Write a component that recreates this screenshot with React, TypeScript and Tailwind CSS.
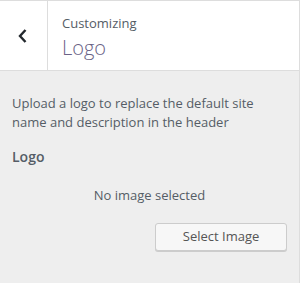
import * as React from 'react'

// Customizer panel: section header + logo control
export default function App() {
  return (
    <div
      className="w-[300px] h-[283px] bg-[#eeeeee] border-t border-r border-[#dddddd] flex flex-col text-[#555d66]"
      style={{ fontFamily: '"Open Sans", "Noto Sans", sans-serif' }}
    >
      {/* Header */}
      <div className="h-[70px] bg-white border-b border-[#dddddd] flex shrink-0">
        <button className="w-[48px] border-r border-[#dddddd] flex items-center justify-center">
          <svg width="12" height="16" viewBox="0 0 12 16" className="ml-[-1px]">
            <polyline points="8.5,2 3,8 8.5,14" fill="none" stroke="#23282d" strokeWidth="2.4" />
          </svg>
        </button>
        <div className="pl-[14px] pt-[10px] flex flex-col">
          <span className="text-[13px] leading-[24px] text-[#555d66]">Customizing</span>
          <h3 className="text-[20px] leading-[26px] font-light text-[#6a6286]">Logo</h3>
        </div>
      </div>

      {/* Body */}
      <div className="px-3 pt-[23px] flex flex-col">
        <p className="text-[13px] leading-[19px]">Upload a logo to replace the default site name and description in the header</p>
        <div className="mt-[15px] text-[14px] font-semibold leading-[20px]">Logo</div>
        <div className="mt-[18px] text-[13px] leading-[20px] text-center">No image selected</div>
        <div className="mt-[18px] flex justify-end">
          <button className="w-[132px] h-[28px] bg-[#f7f7f7] border border-[#cccccc] rounded-[3px] shadow-[0_1px_0_#cccccc] text-[13px] text-[#555555]">
            Select Image
          </button>
        </div>
      </div>
    </div>
  )
}
